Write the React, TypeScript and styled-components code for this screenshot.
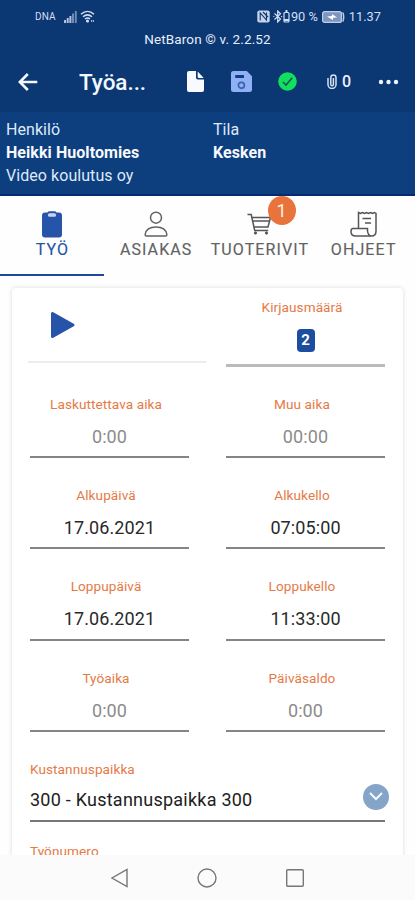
import React from 'react';
import styled, { createGlobalStyle } from 'styled-components';

const Global = createGlobalStyle`
  * { box-sizing: border-box; }
  body { margin: 0; background: #fdfdfd; font-family: Roboto, "Liberation Sans", sans-serif; }
`;

const Screen = styled.div`
  width: 415px;
  height: 900px;
  display: flex;
  flex-direction: column;
  overflow: hidden;
  background: #fefefe;
`;

const TopArea = styled.header`
  height: 112px;
  flex: none;
  background: #0b3772;
  color: #eaf1ff;
`;

const StatusBar = styled.div`
  height: 32px;
  padding: 1px 34px 0 35px;
  display: flex;
  align-items: center;
  justify-content: space-between;
  color: #d3def2;
`;

const StatusGroup = styled.div`
  display: flex;
  align-items: center;
`;

const Carrier = styled.span`
  font-size: 10px;
  letter-spacing: 0.1px;
  margin-right: 8px;
`;

const StatusText = styled.span<{ $gap?: number }>`
  font-size: 12.8px;
  line-height: 14px;
  margin-left: ${(p) => p.$gap ?? 0}px;
  white-space: nowrap;
`;

const Version = styled.div`
  height: 16px;
  line-height: 15px;
  text-align: center;
  font-size: 13.5px;
  letter-spacing: 0.12px;
  color: #e6eefc;
`;

const Toolbar = styled.div`
  height: 67px;
  display: grid;
  grid-template-columns: 56px 117px 45px 46px 46px 58px 40px;
  align-items: center;
`;

const ToolCell = styled.div`
  display: flex;
  align-items: center;
  justify-content: center;
`;

const Title = styled.h1`
  margin: 0 0 0 23px;
  font-size: 22.5px;
  line-height: 28px;
  font-weight: 500;
  letter-spacing: -0.05px;
  color: #f3f7ff;
`;

const Attachment = styled(ToolCell)`
  gap: 5px;
  font-size: 16px;
  font-weight: 500;
`;

const Summary = styled.section`
  height: 84px;
  flex: none;
  padding: 6px 6px 0;
  display: grid;
  grid-template-columns: 207px 1fr;
  background: #0d3e7e;
  border-bottom: 2px solid #062a72;
  color: #dfe9fa;
  font-size: 16px;
  line-height: 23px;
  letter-spacing: 0.06px;
`;

const SummaryLine = styled.div<{ $strong?: boolean }>`
  font-weight: ${(p) => (p.$strong ? 700 : 400)};
  color: ${(p) => (p.$strong ? '#f6f9ff' : 'inherit')};
`;

const Tabs = styled.nav`
  height: 80px;
  flex: none;
  display: grid;
  grid-template-columns: repeat(4, 1fr);
  background: #fefefe;
`;

const Tab = styled.div<{ $active?: boolean }>`
  position: relative;
  display: flex;
  flex-direction: column;
  align-items: center;
  padding-top: 13px;
  color: ${(p) => (p.$active ? '#2554a3' : '#626262')};
  border-bottom: 2px solid ${(p) => (p.$active ? '#1c4c98' : 'transparent')};
`;

const TabIcon = styled.div`
  height: 30px;
  display: flex;
  align-items: center;
`;

const TabLabel = styled.span`
  font-size: 16px;
  line-height: 20px;
  margin-top: 1px;
  letter-spacing: 1.1px;
  margin-right: -1.1px;
  -webkit-text-stroke: 0.15px currentColor;
`;

const Badge = styled.span`
  position: absolute;
  top: 0;
  left: 60px;
  width: 28px;
  height: 29px;
  border-radius: 50%;
  background: #e8743b;
  color: #fff0e8;
  font-size: 18px;
  line-height: 29px;
  text-align: center;
`;

const Content = styled.main`
  height: 579px;
  flex: none;
  overflow: hidden;
  padding: 12px 12px 0;
`;

const Card = styled.section`
  height: 700px;
  border-radius: 4px;
  background: #fff;
  box-shadow: 0 0 4px rgba(0, 0, 0, 0.15);
  padding: 0 18px;
`;

const FirstRow = styled.div`
  height: 79px;
  display: flex;
  justify-content: space-between;
  align-items: flex-start;
`;

const PlayBox = styled.div`
  width: 178px;
  height: 75px;
  margin-left: -2px;
  padding: 23px 0 0 22px;
  border-bottom: 2px solid #ececec;
`;

const CountBox = styled.div`
  width: 159px;
  height: 79px;
  padding-top: 10px;
  display: flex;
  flex-direction: column;
  align-items: center;
  border-bottom: 3px solid #bbb;
`;

const Label = styled.span`
  font-size: 13.6px;
  line-height: 18px;
  letter-spacing: 0.07px;
  color: #e57a47;
  white-space: nowrap;
`;

const CenteredLabel = styled(Label)`
  margin-right: 7px;
`;

const Count = styled.span`
  width: 18px;
  height: 23px;
  margin-top: 13px;
  border-radius: 4px;
  background: #1c4d9f;
  color: #fff;
  font-size: 15px;
  font-weight: 700;
  line-height: 22px;
  text-align: center;
`;

const FieldGrid = styled.div`
  display: grid;
  grid-template-columns: 159px 159px;
  grid-template-rows: 91px 91px 92px 91px;
  justify-content: space-between;
`;

const Field = styled.div`
  padding-top: 28px;
  display: flex;
  flex-direction: column;
  align-items: center;
  border-bottom: 2px solid #858585;
`;

const Value = styled.span<{ $muted?: boolean }>`
  font-size: 18px;
  line-height: 24px;
  margin-top: 12px;
  letter-spacing: 0.1px;
  color: ${(p) => (p.$muted ? '#8b8b8b' : '#292929')};
`;

const SelectField = styled.div`
  height: 90px;
  padding-top: 28px;
  display: flex;
  flex-direction: column;
  border-bottom: 2px solid #777;
`;

const SelectRow = styled.div`
  height: 30px;
  margin: 5px -4px 0 0;
  display: flex;
  align-items: center;
  justify-content: space-between;
`;

const SelectValue = styled.span`
  font-size: 18px;
  line-height: 24px;
  margin-top: 3px;
  letter-spacing: 0.24px;
  color: #202020;
`;

const Chevron = styled.span`
  width: 26px;
  height: 26px;
  margin-top: -3px;
  border-radius: 50%;
  background: #84a4c8;
  display: flex;
  align-items: center;
  justify-content: center;
`;

const NextField = styled.div`
  padding-top: 19px;
`;

const NavBar = styled.footer`
  flex: 1;
  display: flex;
  justify-content: center;
  align-items: center;
  gap: 68px;
  background: #fbfbfb;
`;

const fields: { label: string; value: string; muted?: boolean }[] = [
  { label: 'Laskuttettava aika', value: '0:00', muted: true },
  { label: 'Muu aika', value: '00:00', muted: true },
  { label: 'Alkupäivä', value: '17.06.2021' },
  { label: 'Alkukello', value: '07:05:00' },
  { label: 'Loppupäivä', value: '17.06.2021' },
  { label: 'Loppukello', value: '11:33:00' },
  { label: 'Työaika', value: '0:00', muted: true },
  { label: 'Päiväsaldo', value: '0:00', muted: true },
];

const SignalIcon = () => (
  <svg width="13" height="12" viewBox="0 0 13 12" fill="#b3c3df">
    <path d="M0 9h2v3H0zM2.7 7h2v5h-2zM5.4 5h2v7h-2z" />
    <path d="M8 2.5h2V12H8zM10.8 0h2v12h-2z" opacity=".6" />
  </svg>
);

const WifiIcon = () => (
  <svg width="16" height="13" viewBox="0 0 16 13" fill="none" stroke="#d3def2" strokeWidth="1.5">
    <path d="M1 4.3c4-3.8 9-3.8 13 0M3 6.8c3-2.6 6-2.6 9 0M5 9c2-1.5 3.4-1.5 5 0" />
    <circle cx="7.5" cy="11" r=".8" fill="#d3def2" />
    <path d="M11 11h3" strokeDasharray="1.3 .7" />
  </svg>
);

const NfcIcon = () => (
  <svg width="13" height="13" viewBox="0 0 13 13">
    <rect x=".3" y=".5" width="12.4" height="12" rx="2" fill="#c8d4ea" />
    <path d="M3.2 10.5V3l6.3 7V2.5M6 2l5 5" fill="none" stroke="#0b3772" strokeWidth="1.1" />
  </svg>
);

const BluetoothIcon = () => (
  <svg width="17" height="13" viewBox="0 0 17 13" fill="none" stroke="#d3def2" strokeWidth="1.2">
    <path d="M1.5 3.5l6 5.5L4.7 12V1l2.8 2.8-6 5.7M.3 6.5h1M8 6.5h1.2" />
    <rect x="11" y="2.5" width="5" height="9.5" rx="1" />
    <path d="M12.5 1h2M11 10h5" strokeWidth="2" />
  </svg>
);

const BatteryIcon = () => (
  <svg width="23" height="12" viewBox="0 0 23 12">
    <rect x=".6" y=".6" width="18.8" height="10.8" rx="2" fill="#7e96bf" stroke="#c1cee6" strokeWidth="1.2" />
    <path d="M5 5.5l5-.5V3l5 3.5-4 .3V9z" fill="#fff" />
    <path d="M20.5 1.5c1.5 1 1.5 8 0 9" fill="none" stroke="#c1cee6" strokeWidth="1.5" />
  </svg>
);

const BackIcon = () => (
  <svg width="20" height="18" viewBox="0 0 20 18" fill="none" stroke="#f3f7ff" strokeWidth="2.6">
    <path d="M19.3 9H2M9.8 1L1.8 9l8 8" />
  </svg>
);

const DocumentIcon = () => (
  <svg width="17" height="21" viewBox="0 0 17 21" fill="#f8faff">
    <path d="M2 0h7v6.5a2 2 0 0 0 2 2h6V19a2 2 0 0 1-2 2H2a2 2 0 0 1-2-2V2a2 2 0 0 1 2-2z" />
    <path d="M10.7.5L16.7 7H12q-1.3 0-1.3-1.3z" />
  </svg>
);

const SaveIcon = () => (
  <svg width="21" height="21" viewBox="0 0 21 21">
    <path d="M2.5 0h13.3L21 5.2v13.3a2.5 2.5 0 0 1-2.5 2.5h-16A2.5 2.5 0 0 1 0 18.5v-16A2.5 2.5 0 0 1 2.5 0z" fill="#90b0f5" />
    <rect x="4.2" y="4" width="8.8" height="3" rx=".5" fill="#113d80" />
    <circle cx="10.4" cy="14.3" r="3" fill="none" stroke="#3b63ac" strokeWidth="1.7" />
  </svg>
);

const CheckIcon = () => (
  <svg width="19" height="19" viewBox="0 0 19 19">
    <circle cx="9.5" cy="9.5" r="9.3" fill="#12df60" />
    <path d="M5 10l3 3 6.2-7.3" fill="none" stroke="#17594f" strokeWidth="1.7" />
  </svg>
);

const ClipIcon = () => (
  <svg width="10" height="15" viewBox="0 0 10 15" fill="none" stroke="#d7e1f2" strokeWidth="1.5">
    <path d="M1 4v6.5a4 4 0 0 0 8 0V3.5a2.6 2.6 0 0 0-5.2 0v7a1.3 1.3 0 0 0 2.6 0V4" />
  </svg>
);

const MoreIcon = () => (
  <svg width="21" height="6" viewBox="0 0 21 6" fill="#edf3ff">
    <circle cx="3" cy="3" r="2.2" />
    <circle cx="10.5" cy="3" r="2.2" />
    <circle cx="18" cy="3" r="2.2" />
  </svg>
);

const ClipboardIcon = () => (
  <svg width="20" height="27" viewBox="0 0 20 27">
    <path d="M3 1.5h2.5Q6 .3 7.5.3h5q1.5 0 2 1.2H17q3 0 3 3v19q0 3-3 3H3q-3 0-3-3v-19q0-3 3-3z" fill="#2654a8" />
    <rect x="6" y="2.3" width="8" height="3.5" rx="1.5" fill="#c6d5ef" />
  </svg>
);

const PersonIcon = () => (
  <svg width="24" height="26" viewBox="0 0 24 26" fill="none" stroke="#626262" strokeWidth="1.5">
    <circle cx="12" cy="6.7" r="5.5" />
    <path d="M2.5 25h19q1.5 0 1.3-1.7C22 18.5 17.5 16 12 16S2 18.5 1.2 23.3Q1 25 2.5 25z" />
  </svg>
);

const CartIcon = () => (
  <svg width="25" height="22" viewBox="0 0 25 22" fill="none" stroke="#555" strokeWidth="1.5">
    <path d="M.5 1.500h3.700l3.500 16h13.500M5 4.500h18.500l-2.500 9.500H7M6 8h16.500" />
    <circle cx="8.5" cy="20" r="1.2" fill="#555" strokeWidth=".8" />
    <circle cx="19.5" cy="20" r="1.2" fill="#555" strokeWidth=".8" />
  </svg>
);

const ReceiptIcon = () => (
  <svg width="27" height="26" viewBox="0 0 27 26" fill="none" stroke="#555" strokeWidth="1.5">
    <path d="M8.5 17V1.5l2 1 2-1 2 1 2-1 2 1 2-1 2 1 2-1 1.5 1V20q0 5-4.5 5h-16Q1 25 1 20.5 1 17.500 3 17.500h14.500V20q.5 4.500 4 5M12.500 7.500H21M15 12h6" />
  </svg>
);

const PlayIcon = () => (
  <svg width="26" height="28" viewBox="0 0 26 28">
    <path d="M2.5 2.5v23L23 14z" fill="#2754a9" stroke="#2754a9" strokeWidth="3" strokeLinejoin="round" />
  </svg>
);

export default function App() {
  return (
    <>
      <Global />
      <Screen>
        <TopArea>
          <StatusBar>
            <StatusGroup>
              <Carrier>DNA</Carrier>
              <SignalIcon />
              <StatusText $gap={3} />
              <WifiIcon />
            </StatusGroup>
            <StatusGroup>
              <NfcIcon />
              <StatusText $gap={3} />
              <BluetoothIcon />
              <StatusText $gap={1}>90 %</StatusText>
              <StatusText $gap={4} />
              <BatteryIcon />
              <StatusText $gap={4}>11.37</StatusText>
            </StatusGroup>
          </StatusBar>
          <Version>NetBaron © v. 2.2.52</Version>
          <Toolbar>
            <ToolCell><BackIcon /></ToolCell>
            <Title>Työa...</Title>
            <ToolCell><DocumentIcon /></ToolCell>
            <ToolCell><SaveIcon /></ToolCell>
            <ToolCell><CheckIcon /></ToolCell>
            <Attachment><ClipIcon />0</Attachment>
            <ToolCell><MoreIcon /></ToolCell>
          </Toolbar>
        </TopArea>
        <Summary>
          <div>
            <SummaryLine>Henkilö</SummaryLine>
            <SummaryLine $strong>Heikki Huoltomies</SummaryLine>
            <SummaryLine>Video koulutus oy</SummaryLine>
          </div>
          <div>
            <SummaryLine>Tila</SummaryLine>
            <SummaryLine $strong>Kesken</SummaryLine>
          </div>
        </Summary>
        <Tabs>
          <Tab $active>
            <TabIcon><ClipboardIcon /></TabIcon>
            <TabLabel>TYÖ</TabLabel>
          </Tab>
          <Tab>
            <TabIcon><PersonIcon /></TabIcon>
            <TabLabel>ASIAKAS</TabLabel>
          </Tab>
          <Tab>
            <TabIcon><CartIcon /></TabIcon>
            <TabLabel>TUOTERIVIT</TabLabel>
            <Badge>1</Badge>
          </Tab>
          <Tab>
            <TabIcon><ReceiptIcon /></TabIcon>
            <TabLabel>OHJEET</TabLabel>
          </Tab>
        </Tabs>
        <Content>
          <Card>
            <FirstRow>
              <PlayBox><PlayIcon /></PlayBox>
              <CountBox>
                <CenteredLabel>Kirjausmäärä</CenteredLabel>
                <Count>2</Count>
              </CountBox>
            </FirstRow>
            <FieldGrid>
              {fields.map((f) => (
                <Field key={f.label}>
                  <CenteredLabel>{f.label}</CenteredLabel>
                  <Value $muted={f.muted}>{f.value}</Value>
                </Field>
              ))}
            </FieldGrid>
            <SelectField>
              <Label>Kustannuspaikka</Label>
              <SelectRow>
                <SelectValue>300 - Kustannuspaikka 300</SelectValue>
                <Chevron>
                  <svg width="14" height="9" viewBox="0 0 14 9" fill="none" stroke="#f5faff" strokeWidth="2">
                    <path d="M1 1l6 6 6-6" />
                  </svg>
                </Chevron>
              </SelectRow>
            </SelectField>
            <NextField><Label>Työnumero</Label></NextField>
          </Card>
        </Content>
        <NavBar>
          <svg width="18" height="20" viewBox="0 0 18 20" fill="none" stroke="#777" strokeWidth="1.4">
            <path d="M16 1.5v17L1 10z" />
          </svg>
          <svg width="20" height="20" viewBox="0 0 20 20" fill="none" stroke="#777" strokeWidth="1.4">
            <circle cx="10" cy="10" r="9" />
          </svg>
          <svg width="20" height="20" viewBox="0 0 20 20" fill="none" stroke="#777" strokeWidth="1.4">
            <rect x="1.7" y="1.7" width="16.6" height="16.6" rx="1" />
          </svg>
        </NavBar>
      </Screen>
    </>
  );
}
